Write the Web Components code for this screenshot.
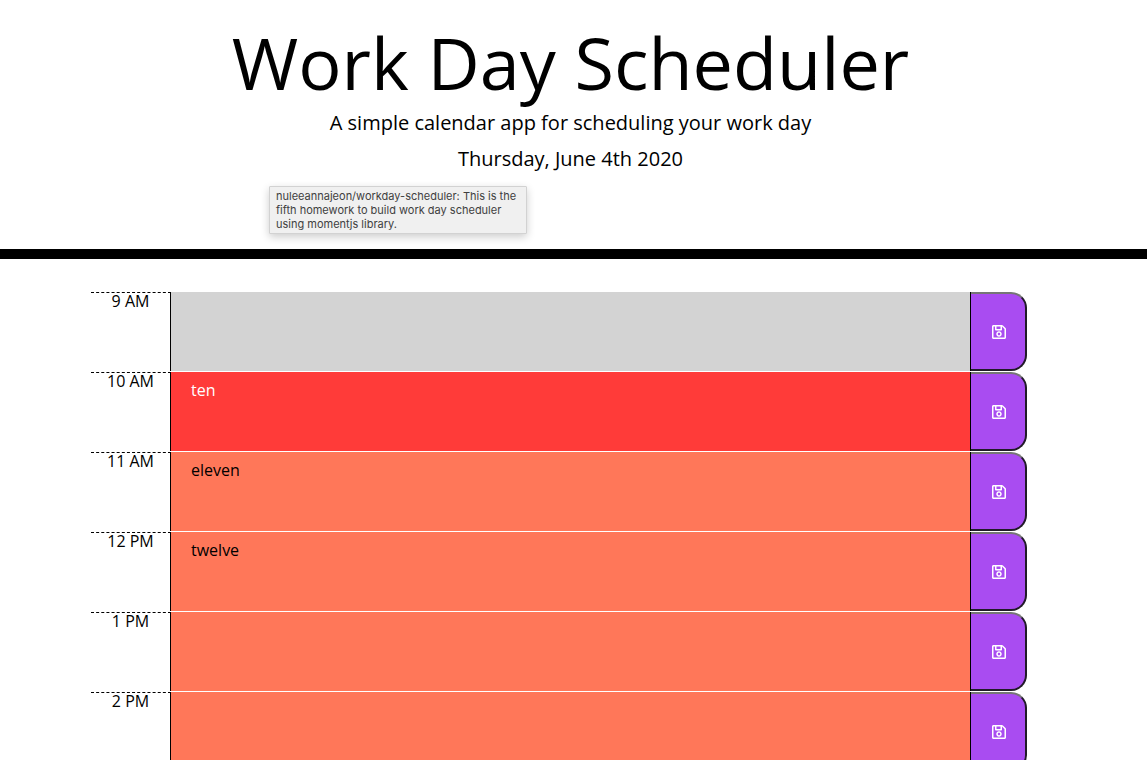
<!DOCTYPE html>
<html lang="en">
<head>
<meta charset="utf-8">
<meta name="viewport" content="width=device-width, initial-scale=1">
<title>Work Day Scheduler</title>
<style>
  body { margin: 0; background: #fff; color: #000; font: 16px/24px "Open Sans", sans-serif; }
</style>
</head>
<body>
<page-header>
  <span slot="title">Work Day Scheduler</span>
  <span slot="lead">A simple calendar app for scheduling your work day</span>
  <span slot="date">Thursday, June 4th 2020</span>
  <hover-tip slot="tip">nuleeannajeon/workday-scheduler: This is the fifth homework to build work day scheduler using momentjs library.</hover-tip>
</page-header>
<day-planner>
  <time-block hour="9 AM" state="past"></time-block>
  <time-block hour="10 AM" state="present" note="ten"></time-block>
  <time-block hour="11 AM" state="future" note="eleven"></time-block>
  <time-block hour="12 PM" state="future" note="twelve"></time-block>
  <time-block hour="1 PM" state="future"></time-block>
  <time-block hour="2 PM" state="future"></time-block>
</day-planner>
<script>
const shadow = (host, html) => {
  const t = document.createElement('template');
  t.innerHTML = html;
  host.attachShadow({ mode: 'open' }).append(t.content.cloneNode(true));
  return host.shadowRoot;
};

customElements.define('page-header', class extends HTMLElement {
  constructor() {
    super();
    shadow(this, `
      <style>
        :host { display: block; position: relative; text-align: center; border-bottom: 10px solid #000; padding: 22px 6px 75px 0; }
        h1, p { margin: 0; font-weight: 400; }
        h1 { font-size: 72px; line-height: 80px; margin-bottom: 6px; }
        p { font-size: 20px; line-height: 30px; margin-bottom: 6px; }
        p:last-of-type { margin-bottom: 0; }
        ::slotted(hover-tip) { position: absolute; left: 269px; top: 186px; }
      </style>
      <header>
        <h1><slot name="title"></slot></h1>
        <p><slot name="lead"></slot></p>
        <p><slot name="date"></slot></p>
      </header>
      <slot name="tip"></slot>`);
  }
});

customElements.define('hover-tip', class extends HTMLElement {
  constructor() {
    super();
    this.setAttribute('role', 'tooltip');
    shadow(this, `
      <style>
        :host { display: block; box-sizing: border-box; width: 258px; padding: 2px 6px; background: #f0f0f0; border: 1px solid #d2d2d2; border-radius: 1px; box-shadow: 0 3px 8px rgba(0,0,0,.2); color: #404040; font: 11px/14px Inter, sans-serif; text-align: left; }
      </style>
      <slot></slot>`);
  }
});

customElements.define('day-planner', class extends HTMLElement {
  constructor() {
    super();
    shadow(this, `
      <style>
        :host { display: block; padding: 33px 5px 0 0; }
        main { display: grid; gap: 1px; max-width: 960px; margin: 0 auto; }
      </style>
      <main><slot></slot></main>`);
  }
});

customElements.define('time-block', class extends HTMLElement {
  connectedCallback() {
    if (this.shadowRoot) return;
    const root = shadow(this, `
      <style>
        :host { display: grid; grid-template-columns: 1fr 10fr 1fr; min-height: 79px; }
        :host([state=past]) { --fill: #d3d3d3; --ink: #fff; }
        :host([state=present]) { --fill: #ff3b39; --ink: #fff; }
        :host([state=future]) { --fill: #ff7759; --ink: #000; }
        label { border-top: 1px dashed #000; border-right: 1px solid #000; line-height: 16px; text-align: center; }
        textarea { display: block; box-sizing: border-box; width: 100%; height: 100%; margin: 0; border: 0; border-right: 1px solid #000; border-radius: 0; padding: 6px 20px; background: var(--fill); color: var(--ink); font: inherit; resize: none; overflow: hidden; outline: 0; }
        button { display: flex; align-items: center; justify-content: center; box-sizing: border-box; width: 56px; margin: 0; padding: 0 0 0 2px; background: #a94cf1; color: #fff; border: 2px solid #211a28; border-top-color: #767676; border-left: 0; border-radius: 0 16px 16px 0; }
        svg { display: block; width: 14px; height: 16px; fill: currentColor; }
      </style>
      <label for="note"></label>
      <textarea id="note" spellcheck="false"></textarea>
      <button type="button" aria-label="Save">
        <svg viewBox="0 0 448 512" aria-hidden="true"><path d="M433.941 129.941l-83.882-83.882A48 48 0 0 0 316.118 32H48C21.49 32 0 53.49 0 80v352c0 26.51 21.49 48 48 48h352c26.51 0 48-21.49 48-48V163.882a48 48 0 0 0-14.059-33.941zM272 80v80H144V80h128zm122 352H54a6 6 0 0 1-6-6V86a6 6 0 0 1 6-6h42v104c0 13.255 10.745 24 24 24h176c13.255 0 24-10.745 24-24V83.882l78.243 78.243a6 6 0 0 1 1.757 4.243V426a6 6 0 0 1-6 6zM224 232c-48.523 0-88 39.477-88 88s39.477 88 88 88 88-39.477 88-88-39.477-88-88-88zm0 128c-22.056 0-40-17.944-40-40s17.944-40 40-40 40 17.944 40 40-17.944 40-40 40z"/></svg>
      </button>`);
    root.querySelector('label').textContent = this.getAttribute('hour');
    root.querySelector('textarea').value = this.getAttribute('note') || '';
  }
});
</script>
</body>
</html>
